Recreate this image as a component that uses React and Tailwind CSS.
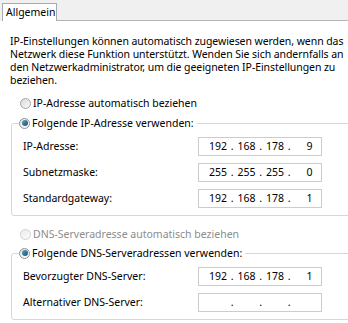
import React from "react";

function Radio({ checked, disabled }) {
  if (checked) {
    return (
      <span className="flex items-center justify-center w-[11px] h-[11px] rounded-full border border-[#8f9396] bg-gradient-to-br from-[#e2e2e2] to-white shrink-0">
        <span className="block w-[6px] h-[6px] rounded-full bg-gradient-to-br from-[#5aa2c4] to-[#17506d]" />
      </span>
    );
  }
  return (
    <span
      className={
        disabled
          ? "block w-[11px] h-[11px] rounded-full border border-[#cfd1d3] bg-gradient-to-br from-[#ececec] to-[#fbfbfb] shrink-0"
          : "block w-[11px] h-[11px] rounded-full border border-[#a2a5a8] bg-gradient-to-br from-[#d9d9d9] to-[#fbfbfb] shrink-0"
      }
    />
  );
}

function RadioRow({ label, checked, disabled }) {
  return (
    <div className="flex items-center h-[14px] gap-[2px]">
      <Radio checked={checked} disabled={disabled} />
      <span className={disabled ? "text-[#8c8c8c]" : "text-black"}>{label}</span>
    </div>
  );
}

function IpBox({ parts }) {
  return (
    <div className="flex items-center w-[124px] h-[19px] border border-[#c9ccd0] bg-white pl-[10px]">
      {parts.map((p, i) => (
        <React.Fragment key={i}>
          <span className="w-[18px] text-right">{p}</span>
          {i < 3 && <span className="w-[10.5px] text-center">.</span>}
        </React.Fragment>
      ))}
    </div>
  );
}

function Field({ label, parts }) {
  return (
    <div className="flex items-center h-[19px]">
      <div className="w-[186px] pl-[11px]">{label}</div>
      <IpBox parts={parts} />
    </div>
  );
}

function Group({ legend, children }) {
  return (
    <fieldset className="ml-[11px] w-[341px] border border-[#d5d7d9] rounded-[3px]">
      <legend className="ml-[7px] pr-[3px] h-[14px]">
        <RadioRow label={legend} checked />
      </legend>
      <div className="flex flex-col gap-[7px] pt-[7px] pb-[7px]">{children}</div>
    </fieldset>
  );
}

export default function App() {
  return (
    <div className="w-[348px] h-[323px] overflow-hidden bg-white text-black text-[10.5px] leading-[13px] font-['Noto_Sans',sans-serif]">
      <div className="flex items-end h-[21px] bg-[#f0f0f0]">
        <div className="ml-[2px] h-[18px] w-[55px] bg-white border border-b-0 border-[#a7a9ac] pl-[3px] leading-[17px]">
          Allgemein
        </div>
        <div className="flex-1 h-full border-b border-[#b2b4b7]" />
      </div>

      <p className="mt-[14px] px-[10px] whitespace-nowrap tracking-[-0.07px]">
        IP-Einstellungen können automatisch zugewiesen werden, wenn das
        <br />
        Netzwerk diese Funktion unterstützt. Wenden Sie sich andernfalls an
        <br />
        den Netzwerkadministrator, um die geeigneten IP-Einstellungen zu
        <br />
        beziehen.
      </p>

      <div className="mt-[9px] ml-[20px]">
        <RadioRow label="IP-Adresse automatisch beziehen" />
      </div>

      <div className="mt-[6px]">
        <Group legend="Folgende IP-Adresse verwenden:">
          <Field label="IP-Adresse:" parts={["192", "168", "178", "9"]} />
          <Field label="Subnetzmaske:" parts={["255", "255", "255", "0"]} />
          <Field label="Standardgateway:" parts={["192", "168", "178", "1"]} />
        </Group>
      </div>

      <div className="mt-[11px] ml-[20px]">
        <RadioRow label="DNS-Serveradresse automatisch beziehen" disabled />
      </div>

      <div className="mt-[5px]">
        <Group legend="Folgende DNS-Serveradressen verwenden:">
          <Field label="Bevorzugter DNS-Server:" parts={["192", "168", "178", "1"]} />
          <Field label="Alternativer DNS-Server:" parts={["", "", "", ""]} />
        </Group>
      </div>
    </div>
  );
}
